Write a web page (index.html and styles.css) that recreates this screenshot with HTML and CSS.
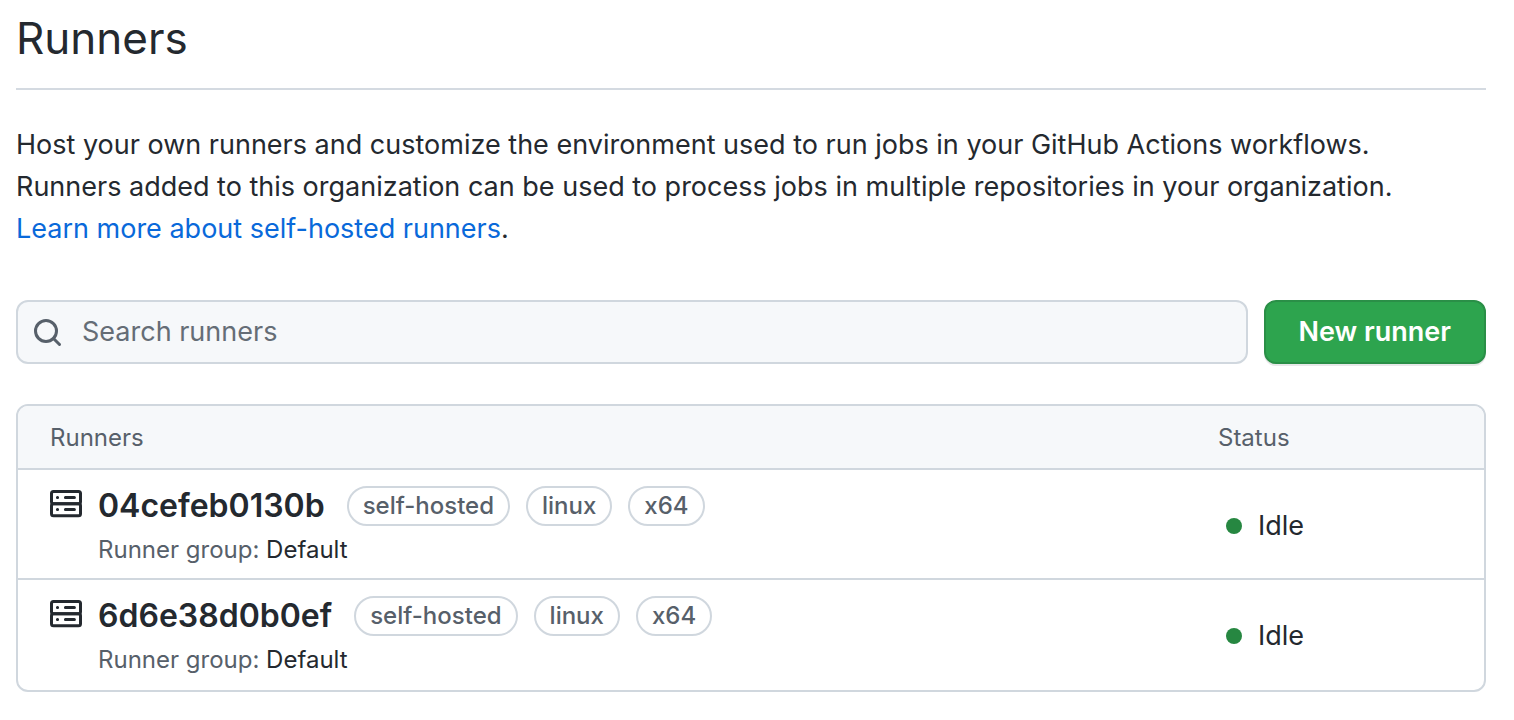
FILE: index.html
```html
<!DOCTYPE html>
<html lang="en">
<head>
<meta charset="utf-8">
<title>Runners</title>
<link rel="stylesheet" href="styles.css">
</head>
<body>
<main class="page">
  <h1 class="title">Runners</h1>
  <p class="intro">Host your own runners and customize the environment used to run jobs in your GitHub Actions workflows. Runners added to this organization can be used to process jobs in multiple repositories in your organization. <a href="#" class="link">Learn more about self-hosted runners</a>.</p>
  <form class="toolbar">
    <label class="search">
      <svg class="search-icon" viewBox="0 0 32 32" aria-hidden="true"><circle cx="14" cy="15" r="10.500"/><path d="M21.500 22.500l6 6"/></svg>
      <input class="search-input" type="text" placeholder="Search runners" aria-label="Search runners">
    </label>
    <button class="new-runner" type="button">New runner</button>
  </form>
  <table class="runners">
    <thead>
      <tr><th class="col-runner" scope="col">Runners</th><th class="col-status" scope="col">Status</th></tr>
    </thead>
    <tbody>
      <tr>
        <td class="col-runner">
          <div class="runner">
            <svg class="server-icon" viewBox="0 0 32 28" aria-hidden="true"><rect x="1.500" y="1.500" width="29" height="12.300" rx="2"/><rect x="1.500" y="13.800" width="29" height="12" rx="2"/><path d="M7.400 7.500h.2M15.400 7.500h9M7.400 19.500h.2M15.400 19.500h9"/></svg>
            <div class="details">
              <div class="heading"><strong class="name">04cefeb0130b</strong><span class="label">self-hosted</span><span class="label">linux</span><span class="label">x64</span></div>
              <div class="group">Runner group: <span class="group-name">Default</span></div>
            </div>
          </div>
        </td>
        <td class="col-status"><span class="status"><span class="dot"></span>Idle</span></td>
      </tr>
      <tr>
        <td class="col-runner">
          <div class="runner">
            <svg class="server-icon" viewBox="0 0 32 28" aria-hidden="true"><rect x="1.500" y="1.500" width="29" height="12.300" rx="2"/><rect x="1.500" y="13.800" width="29" height="12" rx="2"/><path d="M7.400 7.500h.2M15.400 7.500h9M7.400 19.500h.2M15.400 19.500h9"/></svg>
            <div class="details">
              <div class="heading"><strong class="name">6d6e38d0b0ef</strong><span class="label">self-hosted</span><span class="label">linux</span><span class="label">x64</span></div>
              <div class="group">Runner group: <span class="group-name">Default</span></div>
            </div>
          </div>
        </td>
        <td class="col-status"><span class="status"><span class="dot"></span>Idle</span></td>
      </tr>
    </tbody>
  </table>
</main>
</body>
</html>
```
FILE: styles.css
```css
* { box-sizing: border-box; }
body {
  margin: 0;
  background: #fff;
  color: #24292f;
  font: 27px/42px Inter, "Liberation Sans", sans-serif;
}
.page { padding: 8px 28px 28px 16px; }
.title {
  margin: 0 0 34px;
  padding-bottom: 20px;
  border-bottom: 2px solid #d4dae1;
  font-size: 44px;
  font-weight: 400;
  line-height: 60px;
}
.intro { margin: 0 0 50px; max-width: 1410px; }
.link { color: #0969da; text-decoration: none; }
.toolbar { display: flex; gap: 16px; margin: 0 0 40px; }
.search {
  display: flex;
  flex: 1;
  align-items: center;
  gap: 18px;
  height: 64px;
  padding: 0 14px;
  border: 2px solid #d0d7de;
  border-radius: 12px;
  background: #f6f8fa;
}
.search-icon {
  flex: none;
  width: 32px;
  height: 32px;
  fill: none;
  stroke: #57606a;
  stroke-width: 3;
  stroke-linecap: round;
}
.search-input {
  flex: 1;
  min-width: 0;
  padding: 0;
  border: 0;
  outline: 0;
  background: transparent;
  color: #24292f;
  font: inherit;
}
.search-input::placeholder { color: #656d76; opacity: 1; }
.new-runner {
  flex: none;
  height: 64px;
  padding: 0 33px;
  border: 2px solid #2a8f47;
  border-radius: 12px;
  background: #2da44e;
  box-shadow: 0 2px 0 rgba(27, 31, 36, 0.1);
  color: #fff;
  font: inherit;
  font-weight: 600;
}
.runners {
  width: 100%;
  border: 2px solid #d0d7de;
  border-radius: 12px;
  border-spacing: 0;
  overflow: hidden;
  table-layout: fixed;
}
th {
  height: 62px;
  padding: 2px 0 0;
  background: #f6f8fa;
  color: #57606a;
  font-size: 24px;
  font-weight: 400;
  line-height: 36px;
  text-align: left;
}
td {
  height: 110px;
  padding: 14px 0 10px;
  border-top: 2px solid #d0d7de;
}
tbody tr:last-child td { height: 112px; padding-bottom: 12px; }
.col-runner { padding-left: 32px; }
.col-status { width: 266px; }
.runner { display: flex; gap: 16px; }
.server-icon {
  flex: none;
  width: 32px;
  height: 28px;
  margin-top: 6px;
  fill: none;
  stroke: #24292f;
  stroke-width: 3;
  stroke-linecap: round;
}
.details { display: grid; gap: 4px; }
.heading { display: flex; align-items: center; gap: 16px; height: 44px; }
.name { margin-right: 6px; font-size: 32px; font-weight: 600; }
.label {
  padding: 0 14px;
  border: 2px solid #d0d7de;
  border-radius: 20px;
  color: #57606a;
  font-size: 24px;
  font-weight: 500;
  line-height: 36px;
}
.group { color: #57606a; font-size: 24px; line-height: 36px; }
.group-name { color: #24292f; }
.status { display: flex; align-items: center; gap: 16px; padding-left: 8px; }
.dot { width: 16px; height: 16px; border-radius: 50%; background: #268741; }
```
